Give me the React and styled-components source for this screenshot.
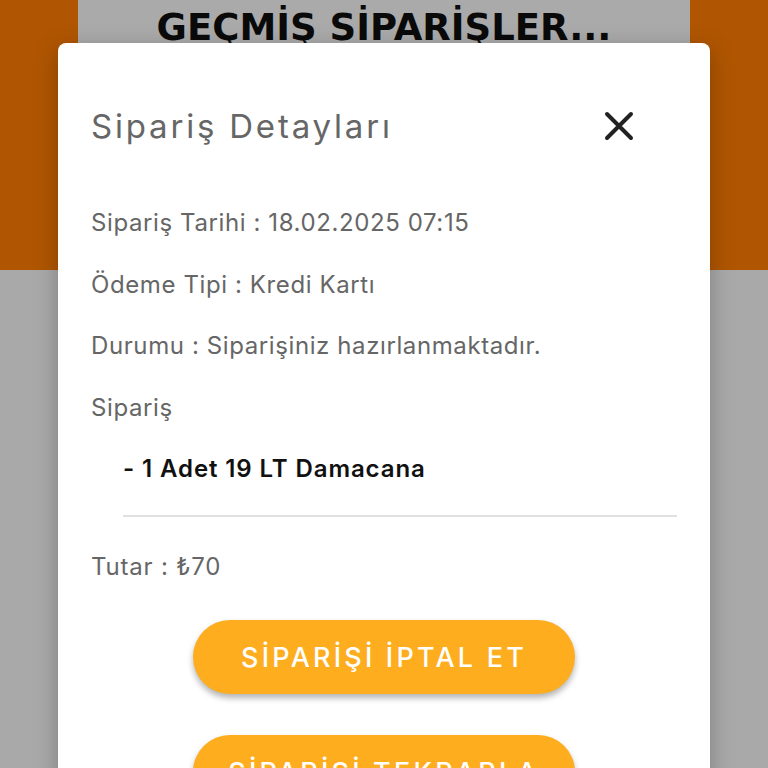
import React from "react";
import styled, { createGlobalStyle } from "styled-components";

const GlobalStyle = createGlobalStyle`
  html, body {
    margin: 0;
    padding: 0;
    height: 100%;
    overflow: hidden;
    background: #a9a9a9;
  }
  * {
    box-sizing: border-box;
  }
`;

function CloseIcon() {
  return (
    <svg width="30" height="30" viewBox="0 0 30 30" fill="none">
      <path
        d="M3 3 L27 27 M27 3 L3 27"
        stroke="#222"
        strokeWidth="4"
        strokeLinecap="round"
      />
    </svg>
  );
}

function App() {
  return (
    <>
      <GlobalStyle />
      <Page>
        <TopBand>
          <HeaderCard>
            <HeaderTitle>GEÇMİŞ SİPARİŞLER...</HeaderTitle>
          </HeaderCard>
        </TopBand>
        <Modal>
          <ModalHead>
            <Title>Sipariş Detayları</Title>
            <CloseButton>
              <CloseIcon />
            </CloseButton>
          </ModalHead>
          <Details>
            <Line>Sipariş Tarihi : 18.02.2025 07:15</Line>
            <Line>Ödeme Tipi : Kredi Kartı</Line>
            <Line>Durumu : Siparişiniz hazırlanmaktadır.</Line>
            <Line>Sipariş</Line>
            <Item>- 1 Adet 19 LT Damacana</Item>
          </Details>
          <Divider />
          <Total>Tutar : ₺70</Total>
          <Actions>
            <ActionButton>SİPARİŞİ İPTAL ET</ActionButton>
            <ActionButton>SİPARİŞİ TEKRARLA</ActionButton>
          </Actions>
        </Modal>
      </Page>
    </>
  );
}

const Page = styled.div`
  position: relative;
  height: 768px;
  background: #a9a9a9;
  font-family: "Inter", "Noto Sans", sans-serif;
`;

const TopBand = styled.div`
  height: 270px;
  background: #b05602;
  padding: 0 78px;
`;

const HeaderCard = styled.div`
  background: #aaaaaa;
  height: 120px;
  display: flex;
  justify-content: center;
  padding-top: 6px;
`;

const HeaderTitle = styled.h1`
  margin: 0;
  font-family: "DejaVu Sans", sans-serif;
  font-weight: 900;
  font-size: 37px;
  line-height: 44px;
  color: #0a0a0a;
`;

const Modal = styled.div`
  position: absolute;
  top: 43px;
  left: 58px;
  width: 652px;
  height: 780px;
  background: #fff;
  border-radius: 8px;
  padding: 0 33px;
  box-shadow: 0 6px 24px rgba(0, 0, 0, 0.25);
`;

const ModalHead = styled.div`
  display: flex;
  align-items: center;
  justify-content: space-between;
  height: 166px;
  padding-right: 43px;
`;

const Title = styled.h2`
  margin: 0;
  font-weight: 400;
  font-size: 33px;
  letter-spacing: 2.8px;
  color: #666;
`;

const CloseButton = styled.button`
  border: none;
  background: none;
  padding: 0;
  display: flex;
  cursor: pointer;
`;

const Details = styled.div`
  display: flex;
  flex-direction: column;
`;

const Line = styled.div`
  height: 61.5px;
  font-size: 24px;
  letter-spacing: 0.6px;
  color: #666;
  line-height: 28px;
`;

const Item = styled.div`
  padding-left: 32px;
  font-size: 24px;
  font-weight: 600;
  letter-spacing: 0.9px;
  color: #111;
  line-height: 28px;
`;

const Divider = styled.hr`
  margin: 32px 0 0 32px;
  border: none;
  border-top: 2px solid #e0e0e0;
`;

const Total = styled.div`
  margin-top: 36px;
  font-size: 24px;
  letter-spacing: 0.8px;
  color: #666;
  line-height: 28px;
`;

const Actions = styled.div`
  display: flex;
  flex-direction: column;
  align-items: center;
  gap: 41px;
  margin-top: 39px;
`;

const ActionButton = styled.button`
  width: 382px;
  height: 74px;
  border: none;
  border-radius: 37px;
  background: #fdad1d;
  color: #fff;
  font-family: "Inter", "Noto Sans", sans-serif;
  font-size: 27px;
  font-weight: 500;
  letter-spacing: 3.2px;
  box-shadow: 0 4px 6px rgba(0, 0, 0, 0.3);
  cursor: pointer;
`;

export default App;
